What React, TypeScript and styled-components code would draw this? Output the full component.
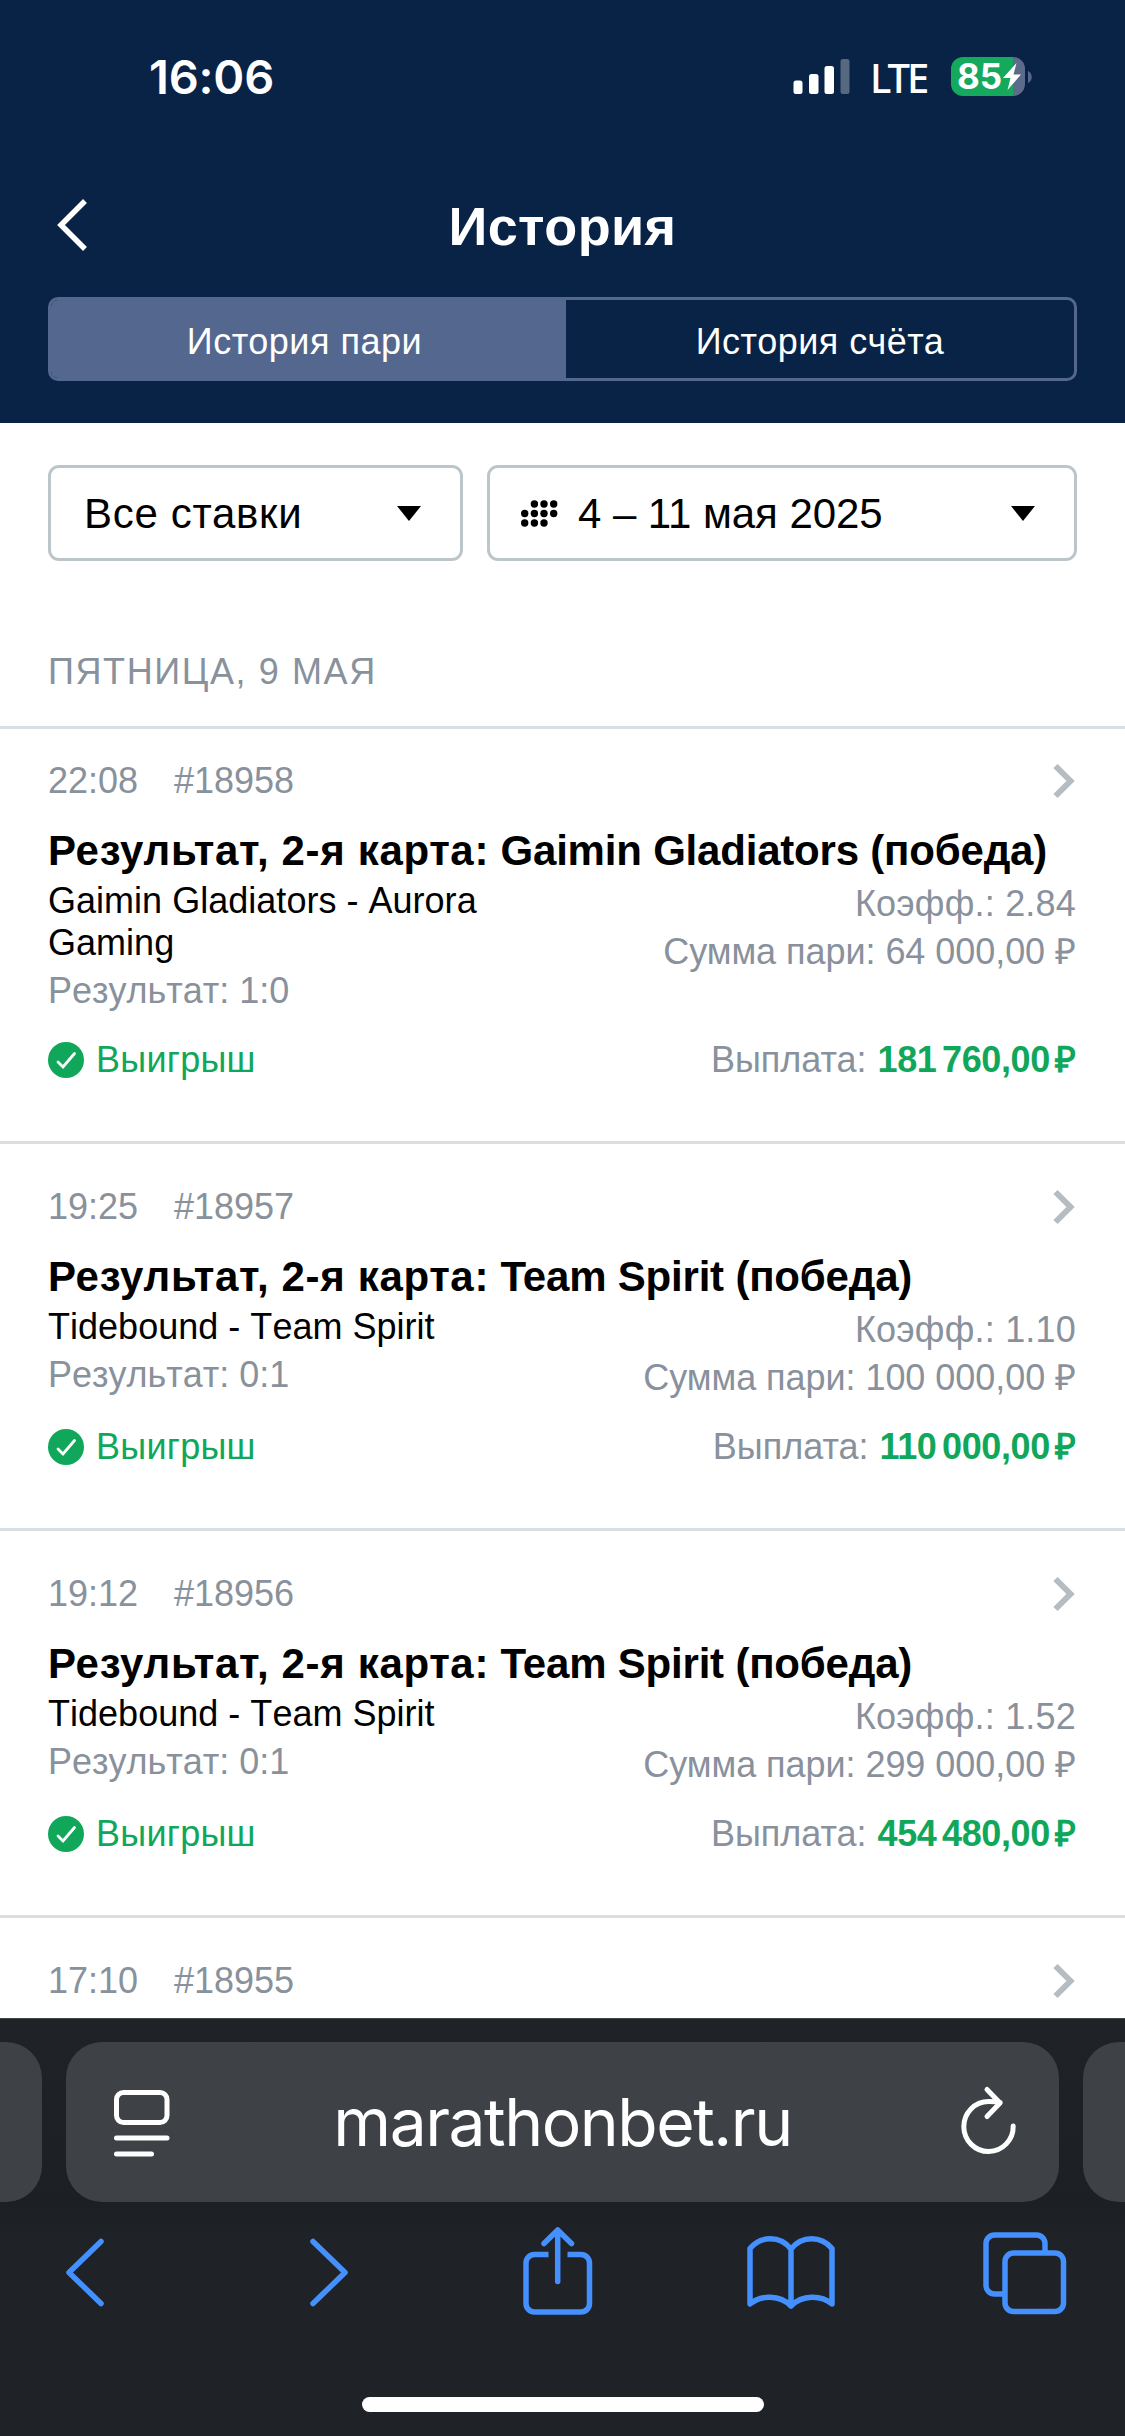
import React from "react";
import styled, { createGlobalStyle } from "styled-components";

const sans = `"Liberation Sans", Arial, sans-serif`;
const system = `Inter, "Liberation Sans", sans-serif`;

const GlobalStyle = createGlobalStyle`
  *, *::before, *::after { box-sizing: border-box; }
  body { margin: 0; background: #fff; }
  button { font: inherit; border: 0; background: none; padding: 0; margin: 0; color: inherit; }
  svg { display: block; flex: none; overflow: visible; }
`;

const Screen = styled.div`
  width: 1125px;
  height: 2436px;
  overflow: hidden;
  display: flex;
  flex-direction: column;
  background: #fff;
  font-family: ${sans};
  color: #000;
`;

const Header = styled.header`
  flex: none;
  height: 423px;
  background: #082346;
  color: #fff;
`;

const StatusBar = styled.div`
  height: 153px;
  padding: 0 93px 0 149px;
  display: flex;
  justify-content: space-between;
  align-items: center;
  font-family: ${system};
`;

const Clock = styled.span`
  font-size: 47px;
  font-weight: 600;
  line-height: 60px;
  letter-spacing: -0.2px;
`;

const Indicators = styled.div`
  display: flex;
  align-items: center;
`;

const Network = styled.span`
  width: 81px;
  margin: 3px 0 0 20px;
  font-family: "Noto Sans", ${system};
  font-size: 40px;
  font-weight: 500;
  line-height: 44px;
  letter-spacing: -3px;
`;

const Battery = styled.div`
  display: flex;
  align-items: center;
  gap: 3px;
`;

const BatteryBody = styled.div`
  width: 74px;
  height: 39px;
  border-radius: 12px;
  display: flex;
  align-items: center;
  padding-left: 6px;
  background: linear-gradient(90deg, #14a95c 62px, #5d6b8b 62px);
  font-size: 35px;
  font-weight: 700;
`;

const BatteryLevel = styled.span`
  width: 46px;
  line-height: 39px;
`;

const NavBar = styled.div`
  height: 144px;
  padding: 0 48px;
  display: grid;
  grid-template-columns: 60px 1fr 60px;
  align-items: center;
`;

const PageTitle = styled.h1`
  margin: 0;
  padding-top: 2px;
  font-size: 54px;
  line-height: 60px;
  font-weight: 700;
  letter-spacing: 0.4px;
  text-align: center;
`;

const Segments = styled.div`
  margin: 0 48px;
  height: 84px;
  display: grid;
  grid-template-columns: 515px 1fr;
  border: 3px solid #54678e;
  border-radius: 10px;
  overflow: hidden;
`;

const Segment = styled.button<{ $active?: boolean }>`
  font-size: 36px;
  line-height: 42px;
  letter-spacing: 0.5px;
  padding: 5px ${(p) => (p.$active ? 8 : 0)}px 0 0;
  color: #fff;
  background: ${(p) => (p.$active ? "#54678e" : "transparent")};
`;

const Content = styled.main`
  flex: 1;
  min-height: 0;
  overflow: hidden;
`;

const Filters = styled.div`
  padding: 42px 48px 0;
  display: grid;
  grid-template-columns: 415px 1fr;
  column-gap: 24px;
`;

const Select = styled.button<{ $inset?: number }>`
  height: 96px;
  border: 3px solid #bcc5c9;
  border-radius: 11px;
  display: flex;
  align-items: center;
  padding: 0 39px 0 ${(p) => p.$inset ?? 33}px;
  font-size: 42px;
  line-height: 48px;
`;

const SelectLabel = styled.span`
  flex: 1;
  padding-top: 2px;
  text-align: left;
  letter-spacing: 0.7px;
`;

const DateLabel = styled(SelectLabel)`
  margin-left: 20px;
  letter-spacing: -0.05px;
`;

const DayHeading = styled.h2`
  margin: 0;
  height: 168px;
  padding: 90px 48px 0;
  border-bottom: 3px solid #d8dee2;
  font-size: 36px;
  line-height: 42px;
  font-weight: 400;
  letter-spacing: 1.6px;
  color: #88919c;
`;

const BetCard = styled.article<{ $first?: boolean }>`
  padding: ${(p) => (p.$first ? 31 : 42)}px 48px 60px;
  border-bottom: 3px solid #d8dee2;
  font-size: 36px;
  line-height: 42px;
`;

const CardTop = styled.div`
  height: 42px;
  padding-right: 2px;
  display: flex;
  align-items: center;
  color: #88919c;
`;

const BetTime = styled.span`
  width: 126px;
`;

const BetNumber = styled.span`
  flex: 1;
`;

const BetTitle = styled.h3`
  margin: 25px 0 0;
  font-size: 42px;
  line-height: 48px;
  font-weight: 700;
  white-space: nowrap;
  letter-spacing: -0.2px;
`;

const Market = styled.span`
  letter-spacing: 0.65px;
`;

const Details = styled.div`
  padding-top: 5px;
  display: flex;
  justify-content: space-between;
`;

const Match = styled.div`
  width: 450px;
  padding-bottom: 3px;
  letter-spacing: 0.02px;
  font-kerning: none;
`;

const Result = styled.div`
  margin-top: 6px;
  letter-spacing: 0;
  color: #88919c;
`;

const Stake = styled.div`
  padding-right: 1px;
  text-align: right;
  line-height: 48px;
  color: #88919c;
  white-space: nowrap;
`;

const Odds = styled.div`
  letter-spacing: 0.2px;
`;

const StakeSum = styled.div`
  letter-spacing: -0.05px;
`;

const Outcome = styled.div`
  margin-top: 24px;
  height: 42px;
  display: flex;
  justify-content: space-between;
  align-items: center;
`;

const Won = styled.span`
  display: flex;
  align-items: center;
  gap: 12px;
  letter-spacing: 0.25px;
  color: #10a75a;
`;

const Payout = styled.span`
  padding-right: 1px;
  color: #88919c;
  white-space: pre;
`;

const PayoutAmount = styled.b`
  margin-left: 1px;
  color: #10a75a;
  letter-spacing: -0.4px;
  word-spacing: -4px;
`;

const BrowserBar = styled.footer`
  flex: none;
  height: 418px;
  border-top: 1px solid #43464a;
  background: linear-gradient(180deg, #1f2226 0, #1c1f24 190px, #1f2227 220px);
  display: flex;
  flex-direction: column;
`;

const TabStrip = styled.div`
  margin-top: 23px;
  height: 160px;
  display: flex;
  gap: 24px;
`;

const NeighbourTab = styled.div<{ $side: "left" | "right" }>`
  width: 42px;
  background: #3e4146;
  border-radius: ${(p) => (p.$side === "left" ? "0 36px 36px 0" : "36px 0 0 36px")};
`;

const AddressField = styled.div`
  flex: 1;
  padding: 0 43px 0 48px;
  display: flex;
  align-items: center;
  justify-content: space-between;
  background: #3e4146;
  border-radius: 36px;
  color: #fff;
`;

const Domain = styled.span`
  margin-right: 6px;
  font-family: ${system};
  font-size: 66px;
  line-height: 80px;
  letter-spacing: -1.5px;
`;

const ReaderButton = styled.button`
  padding-top: 3px;
`;

const ReloadButton = styled.button`
  padding-bottom: 5px;
`;

const Toolbar = styled.nav`
  height: 140px;
  padding: 22px 0 0 66px;
  display: grid;
  grid-template-columns: 244px 213px 224px 236px 83px;
  align-items: start;
  color: #4490ff;
`;

const HomeIndicator = styled.div`
  width: 402px;
  height: 15px;
  margin: 55px auto 0;
  border-radius: 8px;
  background: #fff;
`;

const SignalIcon = () => (
  <svg width="57" height="36" viewBox="0 0 57 36" fill="#fff">
    <rect x="0.500" y="21.500" width="9" height="13.500" rx="2.500" />
    <rect x="16" y="15" width="9.500" height="20" rx="2.500" />
    <rect x="31.500" y="7" width="9.500" height="28" rx="2.500" />
    <rect x="47.500" y="0" width="9" height="35" rx="2.500" opacity=".32" />
  </svg>
);

const BoltIcon = () => (
  <svg width="18" height="27" viewBox="0 0 18 27" fill="#fff">
    <path d="M13.500 0 0 15h7.500L4.500 27 18 11.500h-7.500z" />
  </svg>
);

const BatteryCap = () => (
  <svg width="4" height="12" viewBox="0 0 4 12" fill="#54678e">
    <path d="M0 0c5 2 5 10 0 12z" />
  </svg>
);

const BackIcon = () => (
  <svg width="40" height="52" viewBox="0 0 40 52" fill="none" stroke="#fff" strokeWidth="5.500">
    <path d="M37 2 13 26 37 50" />
  </svg>
);

const CaretIcon = () => (
  <svg width="24" height="15" viewBox="0 0 24 15">
    <path d="M0 0h24L12 15z" />
  </svg>
);

const calendarDots = [
  [13.4, 23, 32.7],
  [3.7, 13.4, 23, 32.7],
  [3.7, 13.4, 23],
];

const CalendarIcon = () => (
  <svg width="37" height="27" viewBox="0 0 37 27">
    {calendarDots.map((row, r) =>
      row.map((x) => <circle key={`${r}-${x}`} cx={x} cy={4 + r * 9.5} r="3.700" />)
    )}
  </svg>
);

const MoreIcon = () => (
  <svg width="22" height="34" viewBox="0 0 22 34" fill="none" stroke="#b5bdc2" strokeWidth="6">
    <path d="M2.500 2 17.500 17 2.500 32" />
  </svg>
);

const CheckIcon = () => (
  <svg width="36" height="36" viewBox="0 0 36 36" fill="none">
    <circle cx="18" cy="18" r="18" fill="#10a75a" />
    <path d="M10 20 15 25 26.500 11.500" stroke="#fff" strokeWidth="2.800" strokeLinecap="round" />
  </svg>
);

const ReaderIcon = () => (
  <svg width="56" height="68" viewBox="0 0 56 68" fill="none" stroke="#fff" strokeWidth="5" strokeLinecap="round">
    <rect x="2.500" y="2.500" width="50.500" height="30" rx="7" />
    <path d="M2.500 48H53M2.500 64H37.500" />
  </svg>
);

const ReloadIcon = () => (
  <svg width="55" height="68" viewBox="0 0 55 68" fill="none" stroke="#fff" strokeWidth="5" strokeLinecap="round" strokeLinejoin="round">
    <path d="M52.200 40A24.700 25 0 1 1 27.500 15.500c4 0 8 .200 11.500 1" />
    <path d="M26 3.500 39 17 26 30.500" />
  </svg>
);

const toolStroke = {
  fill: "none",
  stroke: "currentColor",
  strokeWidth: 5.5,
  strokeLinecap: "round" as const,
  strokeLinejoin: "round" as const,
};

const ToolBack = () => (
  <svg width="38" height="90" viewBox="0 0 38 90" {...toolStroke}>
    <path d="M35 17.500 3 48.500 35 79.500" />
  </svg>
);

const ToolForward = () => (
  <svg width="38" height="90" viewBox="0 0 38 90" {...toolStroke}>
    <path d="M3 17.500 35 48.500 3 79.500" />
  </svg>
);

const ToolShare = () => (
  <svg width="70" height="92" viewBox="0 0 70 92" {...toolStroke}>
    <path d="M25.500 30.500H11.500a8.500 8.500 0 0 0-8.500 8.500v40.500a8.500 8.500 0 0 0 8.500 8.500h46.500a8.500 8.500 0 0 0 8.500-8.500V39a8.500 8.500 0 0 0-8.500-8.500H44.500" strokeLinecap="butt" />
    <path d="M34.700 6V57.500M21 19.500 34.700 6 48.500 19.500" />
  </svg>
);

const ToolBook = () => (
  <svg width="88" height="90" viewBox="0 0 88 90" {...toolStroke}>
    <path d="M3 80V24.500C14 11.500 33 11.500 44 25 55 11.500 74 11.500 85 24.500V80C74 70.700 55 70.700 44 82 33 70.700 14 70.700 3 80ZM44 25V82" />
  </svg>
);

const ToolTabs = () => (
  <svg width="83" height="92" viewBox="0 0 83 92" {...toolStroke}>
    <rect x="22" y="29" width="58.500" height="58.500" rx="8.500" />
    <path d="M22 70H11.500A8.500 8.500 0 0 1 3 61.500V19.500A8.500 8.500 0 0 1 11.500 11H53.500A8.500 8.500 0 0 1 62 19.500V28" strokeLinecap="butt" />
  </svg>
);

interface Bet {
  time: string;
  number: string;
  market: string;
  pick: string;
  match: string;
  result: string;
  odds: string;
  stake: string;
  payout: string;
}

const bets: Bet[] = [
  { time: "22:08", number: "#18958", market: "Результат, 2-я карта:", pick: "Gaimin Gladiators (победа)", match: "Gaimin Gladiators - Aurora Gaming", result: "1:0", odds: "2.84", stake: "64 000,00 ₽", payout: "181 760,00" },
  { time: "19:25", number: "#18957", market: "Результат, 2-я карта:", pick: "Team Spirit (победа)", match: "Tidebound - Team Spirit", result: "0:1", odds: "1.10", stake: "100 000,00 ₽", payout: "110 000,00" },
  { time: "19:12", number: "#18956", market: "Результат, 2-я карта:", pick: "Team Spirit (победа)", match: "Tidebound - Team Spirit", result: "0:1", odds: "1.52", stake: "299 000,00 ₽", payout: "454 480,00" },
];

const CardHead = ({ time, number }: { time: string; number: string }) => (
  <CardTop>
    <BetTime>{time}</BetTime>
    <BetNumber>{number}</BetNumber>
    <MoreIcon />
  </CardTop>
);

export default function App() {
  return (
    <Screen>
      <GlobalStyle />
      <Header>
        <StatusBar>
          <Clock>16:06</Clock>
          <Indicators>
            <SignalIcon />
            <Network>LTE</Network>
            <Battery>
              <BatteryBody>
                <BatteryLevel>85</BatteryLevel>
                <BoltIcon />
              </BatteryBody>
              <BatteryCap />
            </Battery>
          </Indicators>
        </StatusBar>
        <NavBar>
          <BackIcon />
          <PageTitle>История</PageTitle>
        </NavBar>
        <Segments>
          <Segment $active>История пари</Segment>
          <Segment>История счёта</Segment>
        </Segments>
      </Header>
      <Content>
        <Filters>
          <Select>
            <SelectLabel>Все ставки</SelectLabel>
            <CaretIcon />
          </Select>
          <Select $inset={31}>
            <CalendarIcon />
            <DateLabel>4 – 11 мая 2025</DateLabel>
            <CaretIcon />
          </Select>
        </Filters>
        <DayHeading>ПЯТНИЦА, 9 МАЯ</DayHeading>
        {bets.map((bet, i) => (
          <BetCard key={bet.number} $first={i === 0}>
            <CardHead time={bet.time} number={bet.number} />
            <BetTitle>
              <Market>{bet.market}</Market> {bet.pick}
            </BetTitle>
            <Details>
              <Match>
                {bet.match}
                <Result>Результат: {bet.result}</Result>
              </Match>
              <Stake>
                <Odds>Коэфф.: {bet.odds}</Odds>
                <StakeSum>Сумма пари: {bet.stake}</StakeSum>
              </Stake>
            </Details>
            <Outcome>
              <Won>
                <CheckIcon />
                Выигрыш
              </Won>
              <Payout>
                Выплата: <PayoutAmount>{bet.payout} ₽</PayoutAmount>
              </Payout>
            </Outcome>
          </BetCard>
        ))}
        <BetCard>
          <CardHead time="17:10" number="#18955" />
        </BetCard>
      </Content>
      <BrowserBar>
        <TabStrip>
          <NeighbourTab $side="left" />
          <AddressField>
            <ReaderButton>
              <ReaderIcon />
            </ReaderButton>
            <Domain>marathonbet.ru</Domain>
            <ReloadButton>
              <ReloadIcon />
            </ReloadButton>
          </AddressField>
          <NeighbourTab $side="right" />
        </TabStrip>
        <Toolbar>
          <ToolBack />
          <ToolForward />
          <ToolShare />
          <ToolBook />
          <ToolTabs />
        </Toolbar>
        <HomeIndicator />
      </BrowserBar>
    </Screen>
  );
}
